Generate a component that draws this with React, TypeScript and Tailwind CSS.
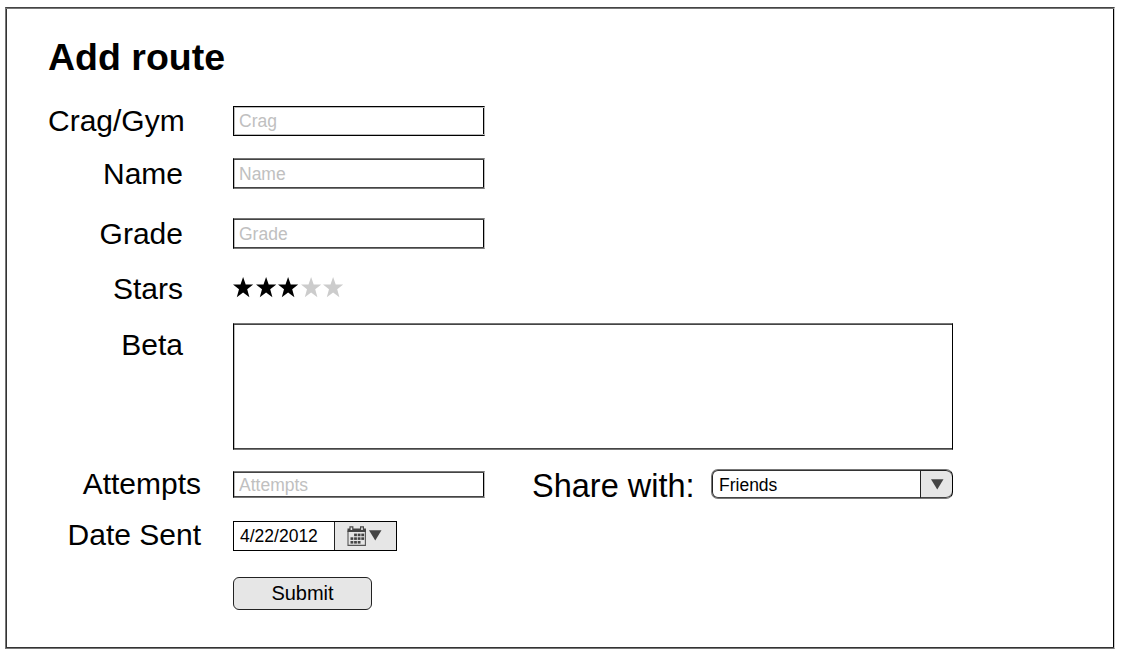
import type { ReactNode } from "react";

const SOFT_FRAME =
  "border border-t-[#777] border-l-[#000] border-r-[#bbb] border-b-[#777] shadow-[inset_0_1px_#444,inset_0_-1px_#444,inset_-1px_0_#000,inset_1px_0_#bbb]";
const CRISP_FRAME =
  "border border-black border-r-[#bbb] shadow-[inset_0_1px_#bbb,inset_0_-1px_#bbb,inset_-1px_0_#000,inset_1px_0_#bbb]";

function Row({ label, labelClass, className, children }: { label: string; labelClass: string; className: string; children: ReactNode }) {
  return (
    <div className={`flex ${className}`}>
      <label className={`shrink-0 text-right text-[30px] leading-[30px] whitespace-nowrap ${labelClass}`}>{label}</label>
      {children}
    </div>
  );
}

function TextField({ placeholder, className }: { placeholder: string; className: string }) {
  return (
    <input
      type="text"
      placeholder={placeholder}
      className={`w-[252px] shrink-0 bg-white pl-[5px] text-[17.5px] leading-5 placeholder:text-[#c0c0c0] ${className}`}
    />
  );
}

function Star({ filled }: { filled: boolean }) {
  return (
    <svg width="20.5" height="21" viewBox="0 0 20.5 21" className={filled ? "text-black" : "text-[#ccc]"}>
      <path fill="currentColor" d="M10.1 0 L12.7 7.6 H20.2 L14.2 12.3 L16.4 20.2 L10.1 15.6 L3.8 20.2 L6 12.3 L0 7.6 H7.5 Z" />
    </svg>
  );
}

function Arrow() {
  return (
    <svg width="13" height="11" viewBox="0 0 13 11">
      <path d="M0 0.3 H12.5 L6.25 10.5 Z" fill="#444" />
    </svg>
  );
}

function CalendarIcon() {
  const days = [
    [7.1, 7.6], [10.7, 7.6], [14.3, 7.6],
    [3.5, 11.3], [7.1, 11.3], [10.7, 11.3], [14.3, 11.3],
    [3.5, 15], [7.1, 15], [10.7, 15],
  ];
  return (
    <svg width="20" height="21" viewBox="0 0 20 21">
      <path d="M1 4.5 V19.4 H18.4 V4.5" fill="none" stroke="#555" strokeWidth="1.1" />
      <path d="M0.5 2.5 H2.4 V0.3 H6.4 V2.5 H13 V0.3 H17 V2.5 H19 V6 H0.5 Z" fill="#444" />
      <path d="M3.6 1.4 H5.2 V4 H3.6 Z M14.2 1.4 H15.8 V4 H14.2 Z" fill="#e6e6e6" />
      {days.map(([x, y]) => (
        <rect key={`${x}-${y}`} x={x} y={y} width="2.8" height="2.6" fill="#444" />
      ))}
    </svg>
  );
}

export default function App() {
  return (
    <div className="h-[653px] w-[1121px] overflow-hidden bg-white pt-[7px] pl-[5px] font-['Liberation_Sans',Arial,sans-serif] text-black">
      <main className="h-[642px] w-[1110px] border border-t-[#444] border-r-[#ccc] border-b-[#777] border-l-[#777] pt-[29px] pl-[42px] shadow-[inset_0_1px_#777,inset_0_-1px_#333,inset_-1px_0_#000,inset_1px_0_#333]">
        <h1 className="text-[37.5px] leading-10 font-bold">Add route</h1>

        <Row label="Crag/Gym" labelClass="w-[136px] mr-[49px]" className="mt-[29px] items-end">
          <TextField placeholder="Crag" className={`h-[30px] ${CRISP_FRAME}`} />
        </Row>
        <Row label="Name" labelClass="w-[135px] mr-[50px]" className="mt-[22px] items-end">
          <TextField placeholder="Name" className={`h-[31px] pt-px ${SOFT_FRAME}`} />
        </Row>
        <Row label="Grade" labelClass="w-[135px] mr-[50px]" className="mt-[29px] items-end">
          <TextField placeholder="Grade" className={`h-[31px] pt-px ${SOFT_FRAME}`} />
        </Row>
        <Row label="Stars" labelClass="w-[135px] mr-[50px]" className="mt-[25px] items-start">
          <div className="flex gap-[2px] pt-[3px]">
            {[1, 2, 3, 4, 5].map((n) => (
              <Star key={n} filled={n <= 3} />
            ))}
          </div>
        </Row>
        <Row label="Beta" labelClass="w-[135px] mr-[50px] pt-[7px]" className="mt-[19px] items-start">
          <textarea className="block h-[127px] w-[720px] resize-none border border-x-black border-t-[#777] border-b-[#777] shadow-[inset_0_1px_#444,inset_0_-1px_#444,inset_1px_0_#bbb]" />
        </Row>
        <Row label="Attempts" labelClass="w-[153px] mr-[32px]" className="mt-[19px] items-start">
          <TextField placeholder="Attempts" className={`mt-[2px] h-[27px] pt-px ${SOFT_FRAME}`} />
          <label className="ml-[47px] w-[162px] text-[32.5px] leading-[34px] whitespace-nowrap">Share with:</label>
          <button type="button" className="ml-[17px] flex h-[30px] w-[242px] items-stretch overflow-hidden rounded-[7px] border border-[#777] border-r-black bg-white text-left shadow-[inset_0_1px_#333,inset_0_-1px_#444,inset_1px_0_#222]">
            <span className="flex-1 pt-px pl-[7px] text-[17.5px] leading-7">Friends</span>
            <span className="flex w-[32px] items-center justify-center rounded-r-[6px] border-l border-[#222] bg-[#e6e6e6] pl-px shadow-[inset_0_1px_#222,inset_0_-1px_#444]">
              <Arrow />
            </span>
          </button>
        </Row>
        <Row label="Date Sent" labelClass="w-[153px] mr-[32px]" className="mt-[17px] items-start">
          <div className="mt-px flex h-[30px] w-[164px] border border-black bg-white">
            <span className="w-[100px] pl-[6px] text-[17.5px] leading-7">4/22/2012</span>
            <button type="button" className="flex flex-1 items-start border-l border-[#222] bg-[#e6e6e6] pt-1 pl-3">
              <CalendarIcon />
              <span className="mt-[4px] ml-[2px]"><Arrow /></span>
            </button>
          </div>
        </Row>
        <button type="button" className="mt-[26px] ml-[185px] block h-[33px] w-[139px] rounded-[6px] border-[1.25px] border-[#222] bg-[#e6e6e6] text-[20px] leading-[31px]">
          Submit
        </button>
      </main>
    </div>
  );
}
